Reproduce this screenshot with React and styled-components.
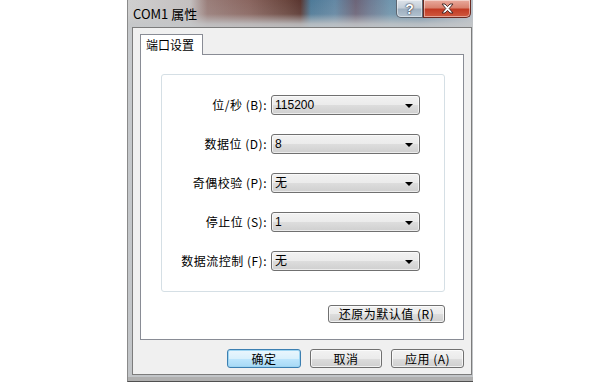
import React from "react";
import styled, { createGlobalStyle } from "styled-components";

const GlobalStyle = createGlobalStyle`
  html, body {
    margin: 0;
    padding: 0;
    background: #ffffff;
  }
  body {
    font-family: "Noto Sans CJK SC", "Liberation Sans", sans-serif;
    font-size: 12px;
    color: #000;
  }
`;

const Page = styled.div`
  width: 600px;
  height: 384px;
  display: flex;
  justify-content: center;
  overflow: hidden;
`;

const Window = styled.div`
  width: 346px;
  height: 382px;
  display: flex;
  flex-direction: column;
  padding: 0 1px 6px 4px;
  box-sizing: border-box;
  background: linear-gradient(
      to bottom,
      rgba(210, 210, 210, 0) 0px,
      rgba(200, 200, 200, 0.1) 14px,
      rgba(196, 198, 200, 0.85) 24px,
      #c6c9cc 34px,
      #c2c5c8 100%
    ),
    linear-gradient(
      to right,
      #cfcfcf 0%,
      #c4c0c0 18%,
      #9a7e7a 23%,
      #8a6660 35%,
      #6a463e 46%,
      #5a3630 50%,
      #4e7a98 53%,
      #6488a4 60%,
      #6c6478 66%,
      #6e7a92 70%,
      #7096ae 76%,
      #6a8ca6 85%,
      #b8c0c8 100%
    );
  border-left: 1px solid #8a8a8a;
  border-bottom: 1px solid #505050;
  box-shadow: inset 0 -4px 0 #b0b0b0;
`;

const TitleBar = styled.div`
  height: 28px;
  display: flex;
  align-items: flex-start;
`;

const Title = styled.div`
  flex: 1;
  padding: 6px 0 0 1px;
  font-size: 13px;
  line-height: 16px;
  color: #000;
`;

const Caption = styled.div`
  display: flex;
  height: 18px;
  margin-right: 1px;
`;

const CaptionButton = styled.div`
  width: ${(p) => p.w}px;
  height: 18px;
  box-sizing: border-box;
  display: flex;
  align-items: center;
  justify-content: center;
  border: 1px solid ${(p) => (p.close ? "#6b2a22" : "#5c6670")};
  border-top: none;
  border-radius: ${(p) => (p.close ? "0 0 5px 0" : "0 0 0 5px")};
  background: ${(p) =>
    p.close
      ? "linear-gradient(to bottom, #e9ab9e 0%, #d9826f 45%, #c23b24 55%, #d05a40 100%)"
      : "linear-gradient(to bottom, #dde3ea 0%, #c4ced8 45%, #9fb0c0 55%, #b2c2d0 100%)"};
  box-shadow: inset 0 0 0 1px rgba(255, 255, 255, 0.45);
  color: #fff;
  font-family: "Liberation Sans", sans-serif;
  font-weight: bold;
  font-size: 14px;
  text-shadow: 0 0 2px #223, 0 0 1px #223;
`;

const Client = styled.div`
  flex: 1;
  display: flex;
  flex-direction: column;
  background: #f0f0f0;
  border: 1px solid #7c7c7c;
  padding: 6px 7px 6px 7px;
`;

const TabStrip = styled.div`
  display: flex;
`;

const Tab = styled.div`
  width: 63px;
  height: 21px;
  box-sizing: border-box;
  border: 1px solid #898c95;
  border-bottom: none;
  background: #ffffff;
  padding: 1px 0 0 5px;
  line-height: 18px;
  margin-bottom: -1px;
  position: relative;
  z-index: 1;
`;

const TabPanel = styled.div`
  height: 286px;
  box-sizing: border-box;
  border: 1px solid #898c95;
  background: #ffffff;
  padding: 19px 18px 0 20px;
  display: flex;
  flex-direction: column;
`;

const Group = styled.div`
  height: 218px;
  box-sizing: border-box;
  border: 1px solid #d5dfe5;
  border-radius: 3px;
  padding: 20px 25px 0 0;
  display: grid;
  grid-template-columns: 105px 149px;
  column-gap: 4px;
  grid-auto-rows: 20px;
  row-gap: 19px;
  align-items: center;
`;

const Label = styled.div`
  text-align: right;
  line-height: 20px;
  white-space: nowrap;
  letter-spacing: 0.5px;
`;

const Combo = styled.div`
  height: 20px;
  box-sizing: border-box;
  border: 1px solid #707070;
  border-radius: 3px;
  background: linear-gradient(to bottom, #f2f2f2 0%, #ebebeb 50%, #dddddd 51%, #cfcfcf 100%);
  display: flex;
  align-items: center;
  padding: 0 6px 0 3px;
  box-shadow: inset 0 0 0 1px rgba(255, 255, 255, 0.6);
`;

const ComboText = styled.span`
  flex: 1;
  line-height: 18px;
  font-family: "Liberation Sans", "Noto Sans CJK SC", sans-serif;
`;

const Arrow = styled.span`
  width: 0;
  height: 0;
  border-left: 4px solid transparent;
  border-right: 4px solid transparent;
  border-top: 4px solid #000;
  margin-top: 1px;
`;

const RestoreRow = styled.div`
  display: flex;
  justify-content: flex-end;
  margin: 13px 0 0 0;
`;

const Button = styled.div`
  width: ${(p) => p.w}px;
  height: ${(p) => p.h || 19}px;
  box-sizing: border-box;
  border: 1px solid ${(p) => (p.def ? "#3c7fb1" : "#707070")};
  border-radius: 3px;
  background: ${(p) =>
    p.def
      ? "linear-gradient(to bottom, #eaf6fd 0%, #d9f0fc 50%, #bee6fd 51%, #a7d9f5 100%)"
      : "linear-gradient(to bottom, #f2f2f2 0%, #ebebeb 50%, #dddddd 51%, #cfcfcf 100%)"};
  box-shadow: inset 0 0 0 1px ${(p) => (p.def ? "#9ed5f2" : "rgba(255,255,255,0.7)")};
  display: flex;
  align-items: center;
  justify-content: center;
  line-height: 16px;
  white-space: nowrap;
  letter-spacing: 0.5px;
`;

const Footer = styled.div`
  display: flex;
  justify-content: flex-end;
  gap: 9px;
  margin-top: 9px;
`;

const rows = [
  ["位/秒 (B):", "115200"],
  ["数据位 (D):", "8"],
  ["奇偶校验 (P):", "无"],
  ["停止位 (S):", "1"],
  ["数据流控制 (F):", "无"],
];

export default function App() {
  return (
    <Page>
      <GlobalStyle />
      <Window>
        <TitleBar>
          <Title>COM1 属性</Title>
          <Caption>
            <CaptionButton w={27}>?</CaptionButton>
            <CaptionButton w={48} close>
              <svg width="13" height="11" viewBox="0 0 13 11">
                <path
                  d="M1 1 L4 1 L6.5 3.6 L9 1 L12 1 L8.2 5.5 L12 10 L9 10 L6.5 7.4 L4 10 L1 10 L4.8 5.5 Z"
                  fill="#ffffff"
                  stroke="#3a2020"
                  strokeWidth="0.9"
                  strokeLinejoin="round"
                />
              </svg>
            </CaptionButton>
          </Caption>
        </TitleBar>
        <Client>
          <TabStrip>
            <Tab>端口设置</Tab>
          </TabStrip>
          <TabPanel>
            <Group>
              {rows.map(([label, value]) => (
                <React.Fragment key={label}>
                  <Label>{label}</Label>
                  <Combo>
                    <ComboText>{value}</ComboText>
                    <Arrow />
                  </Combo>
                </React.Fragment>
              ))}
            </Group>
            <RestoreRow>
              <Button w={117} h={18}>
                还原为默认值 (R)
              </Button>
            </RestoreRow>
          </TabPanel>
          <Footer>
            <Button w={74} def>
              确定
            </Button>
            <Button w={72}>取消</Button>
            <Button w={73}>应用 (A)</Button>
          </Footer>
        </Client>
      </Window>
    </Page>
  );
}
